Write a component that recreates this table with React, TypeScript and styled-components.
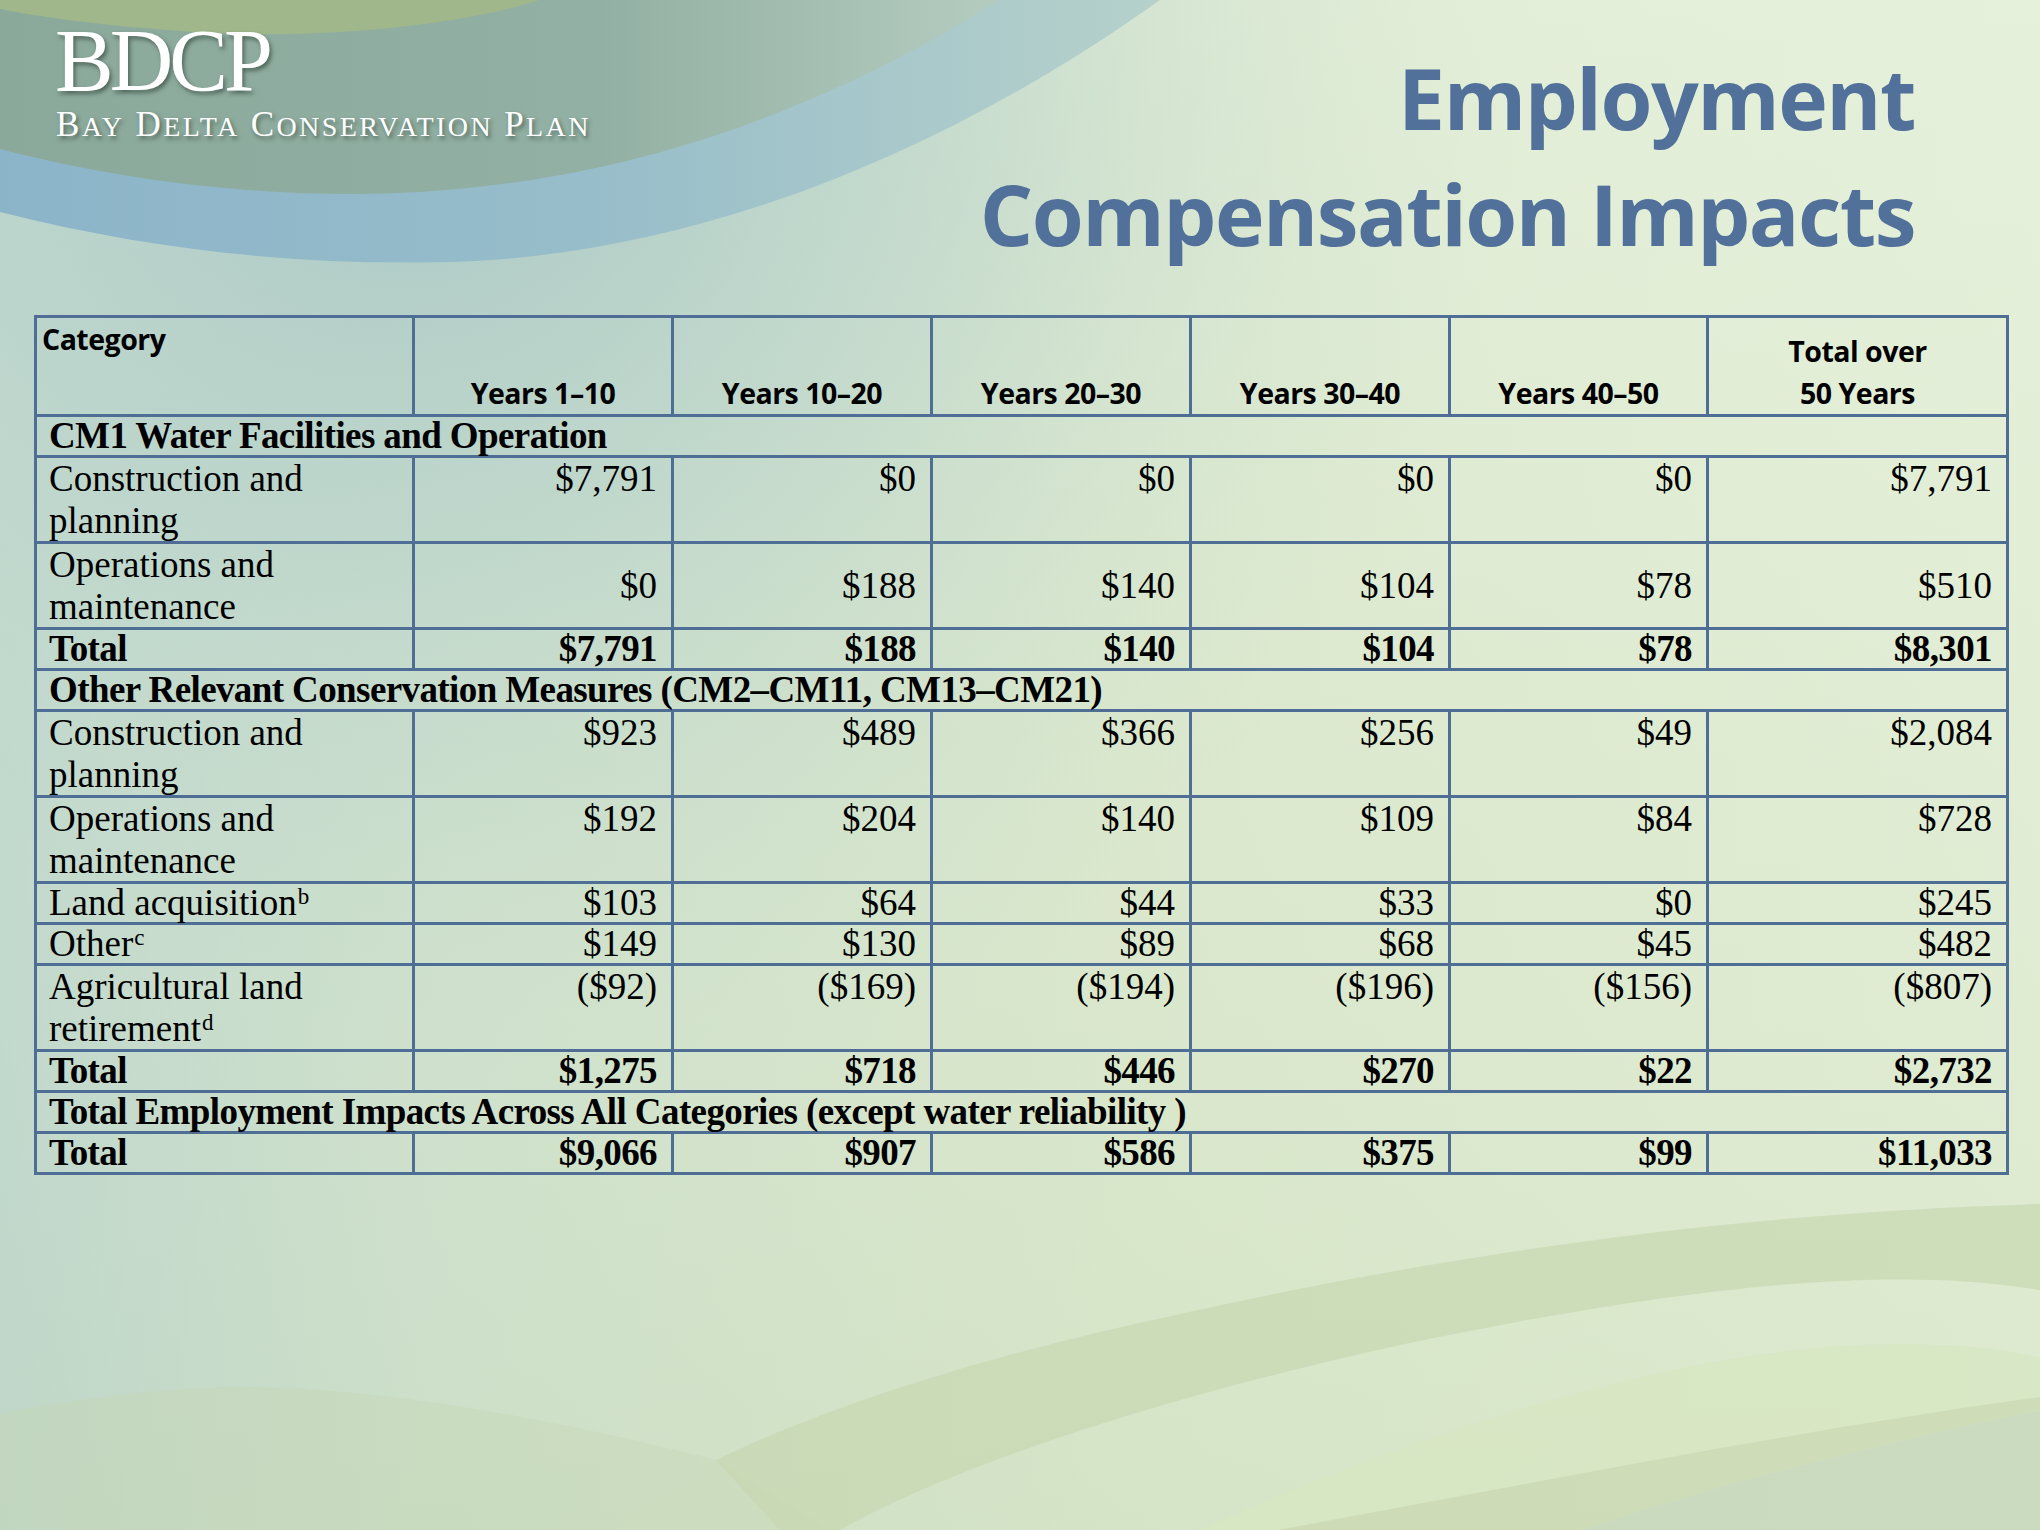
import React from 'react';
import styled, { createGlobalStyle } from 'styled-components';

type Align = 'left' | 'right' | 'center';
type VAlign = 'top' | 'middle' | 'bottom';

type Row =
  | { kind: 'section'; label: string }
  | {
      kind: 'data';
      label: string;
      note?: string;
      values: string[];
      lines: 1 | 2;
      valign?: VAlign;
      bold?: boolean;
    };

const rows: Row[] = [
  { kind: 'section', label: 'CM1 Water Facilities and Operation' },
  {
    kind: 'data',
    label: 'Construction and planning',
    values: ['$7,791', '$0', '$0', '$0', '$0', '$7,791'],
    lines: 2,
  },
  {
    kind: 'data',
    label: 'Operations and maintenance',
    values: ['$0', '$188', '$140', '$104', '$78', '$510'],
    lines: 2,
    valign: 'middle',
  },
  {
    kind: 'data',
    label: 'Total',
    values: ['$7,791', '$188', '$140', '$104', '$78', '$8,301'],
    lines: 1,
    bold: true,
  },
  { kind: 'section', label: 'Other Relevant Conservation Measures (CM2–CM11, CM13–CM21)' },
  {
    kind: 'data',
    label: 'Construction and planning',
    values: ['$923', '$489', '$366', '$256', '$49', '$2,084'],
    lines: 2,
  },
  {
    kind: 'data',
    label: 'Operations and maintenance',
    values: ['$192', '$204', '$140', '$109', '$84', '$728'],
    lines: 2,
  },
  {
    kind: 'data',
    label: 'Land acquisition',
    note: 'b',
    values: ['$103', '$64', '$44', '$33', '$0', '$245'],
    lines: 1,
  },
  {
    kind: 'data',
    label: 'Other',
    note: 'c',
    values: ['$149', '$130', '$89', '$68', '$45', '$482'],
    lines: 1,
  },
  {
    kind: 'data',
    label: 'Agricultural land retirement',
    note: 'd',
    values: ['($92)', '($169)', '($194)', '($196)', '($156)', '($807)'],
    lines: 2,
  },
  {
    kind: 'data',
    label: 'Total',
    values: ['$1,275', '$718', '$446', '$270', '$22', '$2,732'],
    lines: 1,
    bold: true,
  },
  {
    kind: 'section',
    label: 'Total Employment Impacts Across All Categories (except water reliability )',
  },
  {
    kind: 'data',
    label: 'Total',
    values: ['$9,066', '$907', '$586', '$375', '$99', '$11,033'],
    lines: 1,
    bold: true,
  },
];

const periods = ['Years 1–10', 'Years 10–20', 'Years 20–30', 'Years 30–40', 'Years 40–50'];
const colWidths = [378, 259, 259, 259, 259, 258, 300];

// small caps drawn by hand, the synthetic ones come out too small
function CapsLine({ text }: { text: string }) {
  return (
    <>
      {text.split(' ').map((word, i) => (
        <React.Fragment key={i}>
          {i > 0 && ' '}
          {word[0]}
          <Small>{word.slice(1)}</Small>
        </React.Fragment>
      ))}
    </>
  );
}

function Backdrop() {
  return (
    <Art viewBox="0 0 2040 1530" preserveAspectRatio="none" aria-hidden>
      <defs>
        <linearGradient id="base" x1="0" y1="0" x2="1" y2="0">
          <stop offset="0" stopColor="#bcd5cb" />
          <stop offset="0.22" stopColor="#cde0cb" />
          <stop offset="0.55" stopColor="#d8e6ca" />
          <stop offset="1" stopColor="#dfecd2" />
        </linearGradient>
        <linearGradient id="lift" x1="0" y1="0" x2="0" y2="1">
          <stop offset="0" stopColor="#eef6e6" stopOpacity="0.45" />
          <stop offset="0.5" stopColor="#eef6e6" stopOpacity="0.1" />
          <stop offset="1" stopColor="#c9d9b6" stopOpacity="0.2" />
        </linearGradient>
        <radialGradient id="halo" cx="420" cy="60" r="1100" gradientUnits="userSpaceOnUse">
          <stop offset="0" stopColor="#a4c4c4" stopOpacity="0.95" />
          <stop offset="0.45" stopColor="#b3cfc8" stopOpacity="0.6" />
          <stop offset="1" stopColor="#cfe1cc" stopOpacity="0" />
        </radialGradient>
        <linearGradient id="blue" x1="0" y1="0" x2="1" y2="0">
          <stop offset="0" stopColor="#8cb4c9" />
          <stop offset="0.5" stopColor="#97bdca" />
          <stop offset="1" stopColor="#b6d1cb" />
        </linearGradient>
        <linearGradient id="teal" x1="0" y1="0" x2="1" y2="0">
          <stop offset="0" stopColor="#8ba99b" />
          <stop offset="0.6" stopColor="#92b0a3" />
          <stop offset="1" stopColor="#b4ccbf" />
        </linearGradient>
      </defs>
      <rect width="2040" height="1530" fill="url(#base)" />
      <rect width="2040" height="1530" fill="url(#lift)" />
      <rect width="2040" height="1530" fill="url(#halo)" />

      <path
        d="M0,1413 C100,1395 190,1385 265,1387 C420,1392 590,1428 716,1460 L830,1530 L0,1530 Z"
        fill="#c6d8b6"
        opacity="0.45"
      />
      <path
        d="M716,1460 C820,1410 950,1368 1100,1332 C1400,1262 1700,1214 2040,1204 L2040,1290 C1900,1266 1700,1282 1400,1345 C1150,1400 950,1468 840,1530 L780,1530 Z"
        fill="#c8d7b1"
        opacity="0.7"
      />
      <path
        d="M1199,1530 C1400,1440 1650,1355 1860,1345 C1960,1342 2010,1350 2040,1358 L2040,1397 C1800,1430 1550,1480 1278,1530 Z"
        fill="#d7e6c2"
        opacity="0.8"
      />
      <path
        d="M1278,1530 C1550,1480 1800,1430 2040,1397 L2040,1410 C1850,1450 1700,1490 1583,1530 Z"
        fill="#cbdab3"
        opacity="0.8"
      />
      <path
        d="M1583,1530 C1700,1490 1850,1450 2040,1410 L2040,1530 Z"
        fill="#c5d7bb"
        opacity="0.8"
      />

      <path
        d="M0,0 L1160,0 C950,150 700,255 450,262 C300,266 150,250 0,212 Z"
        fill="url(#blue)"
      />
      <path
        d="M0,0 L1000,0 C840,100 650,178 420,192 C300,199 150,188 0,149 Z"
        fill="url(#teal)"
      />
      <path
        d="M0,0 L540,0 C450,28 320,38 210,33 C110,27 40,17 0,9 Z"
        fill="#9fb78a"
      />
    </Art>
  );
}

function App() {
  return (
    <>
      <GlobalStyle />
      <Slide>
        <Backdrop />
        <Top>
          <Logo>
            <LogoMark>BDCP</LogoMark>
            <LogoName>
              <CapsLine text="BAY DELTA CONSERVATION PLAN" />
            </LogoName>
          </Logo>
          <Title>
            <span>Employment</span>
            <span>Compensation Impacts</span>
          </Title>
        </Top>

        <Table>
          <colgroup>
            {colWidths.map((w, i) => (
              <col key={i} style={{ width: w }} />
            ))}
          </colgroup>
          <thead>
            <tr>
              <Head $align="left" $valign="top">
                Category
              </Head>
              {periods.map((p) => (
                <Head key={p} $align="center" $valign="bottom">
                  {p}
                </Head>
              ))}
              <Head $align="center" $valign="bottom">
                Total over
                <br />
                50 Years
              </Head>
            </tr>
          </thead>
          <tbody>
            {rows.map((row, i) =>
              row.kind === 'section' ? (
                <tr key={i}>
                  <Cell colSpan={7} $align="left" $bold $lines={1}>
                    {row.label}
                  </Cell>
                </tr>
              ) : (
                <tr key={i}>
                  <Cell $align="left" $bold={row.bold} $lines={row.lines}>
                    {row.label}
                    {row.note && <Sup>{row.note}</Sup>}
                  </Cell>
                  {row.values.map((v, j) => (
                    <Cell
                      key={j}
                      $align="right"
                      $bold={row.bold}
                      $lines={row.lines}
                      $valign={row.valign}
                    >
                      {v}
                    </Cell>
                  ))}
                </tr>
              ),
            )}
          </tbody>
        </Table>
      </Slide>
    </>
  );
}

export default App;

const GlobalStyle = createGlobalStyle`
  html, body {
    margin: 0;
    padding: 0;
    background: #dce9cf;
  }
`;

const Slide = styled.div`
  position: relative;
  width: 2040px;
  height: 1530px;
  overflow: hidden;
  padding: 0 34px;
  box-sizing: border-box;
`;

const Art = styled.svg`
  position: absolute;
  inset: 0;
  width: 100%;
  height: 100%;
  z-index: 0;
`;

const Top = styled.header`
  position: relative;
  z-index: 1;
  display: flex;
  justify-content: space-between;
  align-items: flex-start;
  height: 315px;
`;

const Logo = styled.div`
  display: flex;
  flex-direction: column;
  margin: 12px 0 0 21px;
  color: #ffffff;
  font-family: 'Liberation Serif', serif;
  text-shadow: 2px 3px 4px rgba(30, 45, 35, 0.55);
`;

const LogoMark = styled.div`
  font-size: 88px;
  line-height: 98px;
  letter-spacing: -4px;
`;

const LogoName = styled.div`
  margin-left: 1px;
  font-size: 35px;
  line-height: 30px;
  letter-spacing: 2.4px;
`;

const Small = styled.span`
  font-size: 28px;
`;

const Title = styled.h1`
  display: flex;
  flex-direction: column;
  align-items: flex-end;
  margin: 40px 91px 0 0;
  font-family: 'Open Sans', sans-serif;
  font-weight: 700;
  font-size: 84px;
  line-height: 116px;
  letter-spacing: -1.5px;
  color: #52719a;
`;

const Table = styled.table`
  position: relative;
  z-index: 1;
  width: 1972px;
  table-layout: fixed;
  border-collapse: collapse;
  border: 3px solid #4f6e96;
  color: #000000;
`;

const Head = styled.th<{ $align: Align; $valign: VAlign }>`
  height: 96px;
  padding: 0 5px;
  border: 3px solid #4f6e96;
  text-align: ${(p) => p.$align};
  vertical-align: ${(p) => p.$valign};
  font-family: 'Open Sans', sans-serif;
  font-weight: 700;
  font-size: 28.5px;
  line-height: 42px;
  letter-spacing: -0.5px;
`;

const Cell = styled.td<{ $align: Align; $bold?: boolean; $lines: 1 | 2; $valign?: VAlign }>`
  padding: 0 14px 0 12px;
  border: 3px solid #4f6e96;
  text-align: ${(p) => p.$align};
  vertical-align: ${(p) => p.$valign ?? 'top'};
  font-family: 'Liberation Serif', serif;
  font-weight: ${(p) => (p.$bold ? 700 : 400)};
  letter-spacing: ${(p) => (p.$bold ? '-0.6px' : '0')};
  font-size: 37px;
  line-height: ${(p) => (p.$lines === 1 ? '38px' : '41.5px')};
  white-space: ${(p) => (p.$lines === 1 ? 'nowrap' : 'normal')};
`;

const Sup = styled.sup`
  font-size: 23px;
  line-height: 0;
  vertical-align: 11px;
  margin-left: 1px;
`;
